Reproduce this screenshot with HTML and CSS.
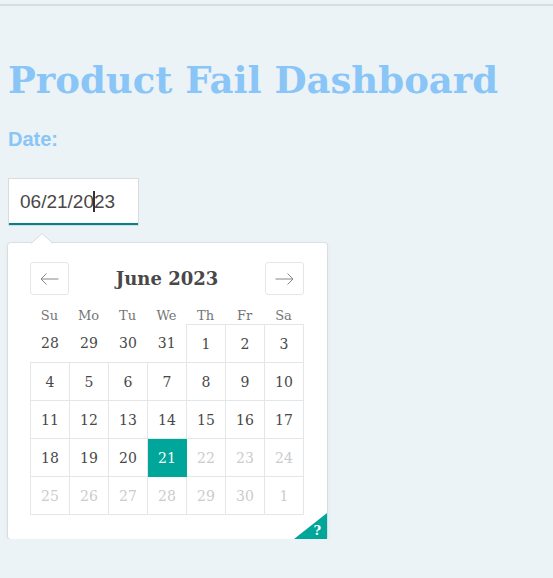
FILE: index.html
```html
<!DOCTYPE html>
<html>
<head>
<meta charset="utf-8">
<title>Product Fail Dashboard</title>
<link rel="stylesheet" href="styles.css">
</head>
<body>
<div class="topline"></div>
<main class="page">
  <h1 class="title">Product Fail Dashboard</h1>
  <div class="label">Date:</div>
  <div class="picker">
    <div class="date-input"><div class="date-text">06/21/20<span class="caret"></span>23</div></div>
    <div class="calendar">
      <svg class="fang" width="22" height="11" viewBox="0 0 22 11"><path d="M0 10.5 L11 0.5 L22 10.5" fill="#fff" stroke="#dbdbdb" stroke-width="1"/></svg>
      <div class="nav">
        <div class="nav-btn"><svg width="19" height="12" viewBox="0 0 19 12"><path d="M18.5 6H1 M6.5 0.5L1 6l5.5 5.5" fill="none" stroke="#82888a" stroke-width="1"/></svg></div>
        <div class="caption">June 2023</div>
        <div class="nav-btn"><svg width="19" height="12" viewBox="0 0 19 12"><path d="M0.5 6H18 M12.5 0.5L18 6l-5.5 5.5" fill="none" stroke="#82888a" stroke-width="1"/></svg></div>
      </div>
      <div class="weekdays">
        <span>Su</span><span>Mo</span><span>Tu</span><span>We</span><span>Th</span><span>Fr</span><span>Sa</span>
      </div>
      <table class="days">
        <tr><td class="blank">28</td><td class="blank">29</td><td class="blank">30</td><td class="blank">31</td><td>1</td><td>2</td><td>3</td></tr>
        <tr><td>4</td><td>5</td><td>6</td><td>7</td><td>8</td><td>9</td><td>10</td></tr>
        <tr><td>11</td><td>12</td><td>13</td><td>14</td><td>15</td><td>16</td><td>17</td></tr>
        <tr><td>18</td><td>19</td><td>20</td><td class="selected">21</td><td class="off">22</td><td class="off">23</td><td class="off">24</td></tr>
        <tr><td class="off">25</td><td class="off">26</td><td class="off">27</td><td class="off">28</td><td class="off">29</td><td class="off">30</td><td class="off">1</td></tr>
      </table>
      <div class="shortcut"><span class="q">?</span></div>
    </div>
  </div>
</main>
</body>
</html>
```
FILE: styles.css
```css
html { background: #ecf3f7; }
body { margin: 0; font-family: "DejaVu Serif", "Liberation Serif", serif; }
.topline { margin-top: 4px; height: 2px; background: #d9dde0; }
.page { padding: 0 8px; }
.title {
  margin: 51px 0 0;
  font-size: 37px;
  line-height: 46px;
  font-weight: bold;
  color: #89c5f6;
}
.label {
  margin-top: 25px;
  font-family: "Liberation Sans", Arial, sans-serif;
  font-weight: bold;
  font-size: 20px;
  line-height: 23px;
  color: #89c5f6;
}
.picker { margin-top: 27px; }
.date-input {
  width: 129px;
  border: 1px solid #dbdbdb;
  background: #fff;
}
.date-text {
  padding: 11px 11px 9px;
  font-family: "Liberation Sans", Arial, sans-serif;
  font-size: 19px;
  line-height: 24px;
  color: #484848;
  border-bottom: 2px solid #008489;
}
.caret {
  display: inline-block;
  width: 2px;
  height: 21px;
  background: #333;
  vertical-align: -4px;
  margin: 0 -1px;
}
.calendar {
  position: relative;
  margin-top: 17px;
  width: 274px;
  padding: 19px 23px 24px 22px;
  background: #fff;
  border-radius: 3px;
  box-shadow: 0 2px 6px rgba(0,0,0,0.05), 0 0 0 1px rgba(0,0,0,0.07);
}
.fang { position: absolute; top: -10px; left: 23px; }
.nav { display: flex; align-items: center; height: 33px; }
.nav-btn {
  box-sizing: border-box;
  width: 39px;
  height: 33px;
  border: 1px solid #e4e7e7;
  border-radius: 3px;
  display: flex;
  align-items: center;
  justify-content: center;
}
.caption {
  flex: 1;
  text-align: center;
  font-size: 18px;
  line-height: 24px;
  font-weight: bold;
  color: #484848;
}
.weekdays { display: flex; margin-top: 12px; height: 17px; }
.weekdays span {
  width: 39px;
  text-align: center;
  font-size: 13px;
  line-height: 17px;
  color: #757575;
}
.days { border-collapse: collapse; table-layout: fixed; }
.days td {
  width: 38px;
  height: 37px;
  padding: 0;
  border: 1px solid #e4e7e7;
  text-align: center;
  font-size: 14px;
  color: #484848;
}
.days td.blank { border: none; }
.days td.off { color: #cacccd; }
.days td.selected { background: #00a699; border-color: #00a699; color: #fff; }
.shortcut {
  position: absolute;
  right: 0;
  bottom: 0;
  width: 0;
  height: 0;
  border-top: 26px solid transparent;
  border-right: 33px solid #00a699;
}
.q {
  position: absolute;
  right: -27px;
  bottom: 1px;
  font-size: 13px;
  line-height: 14px;
  font-weight: bold;
  color: #fff;
}
```
